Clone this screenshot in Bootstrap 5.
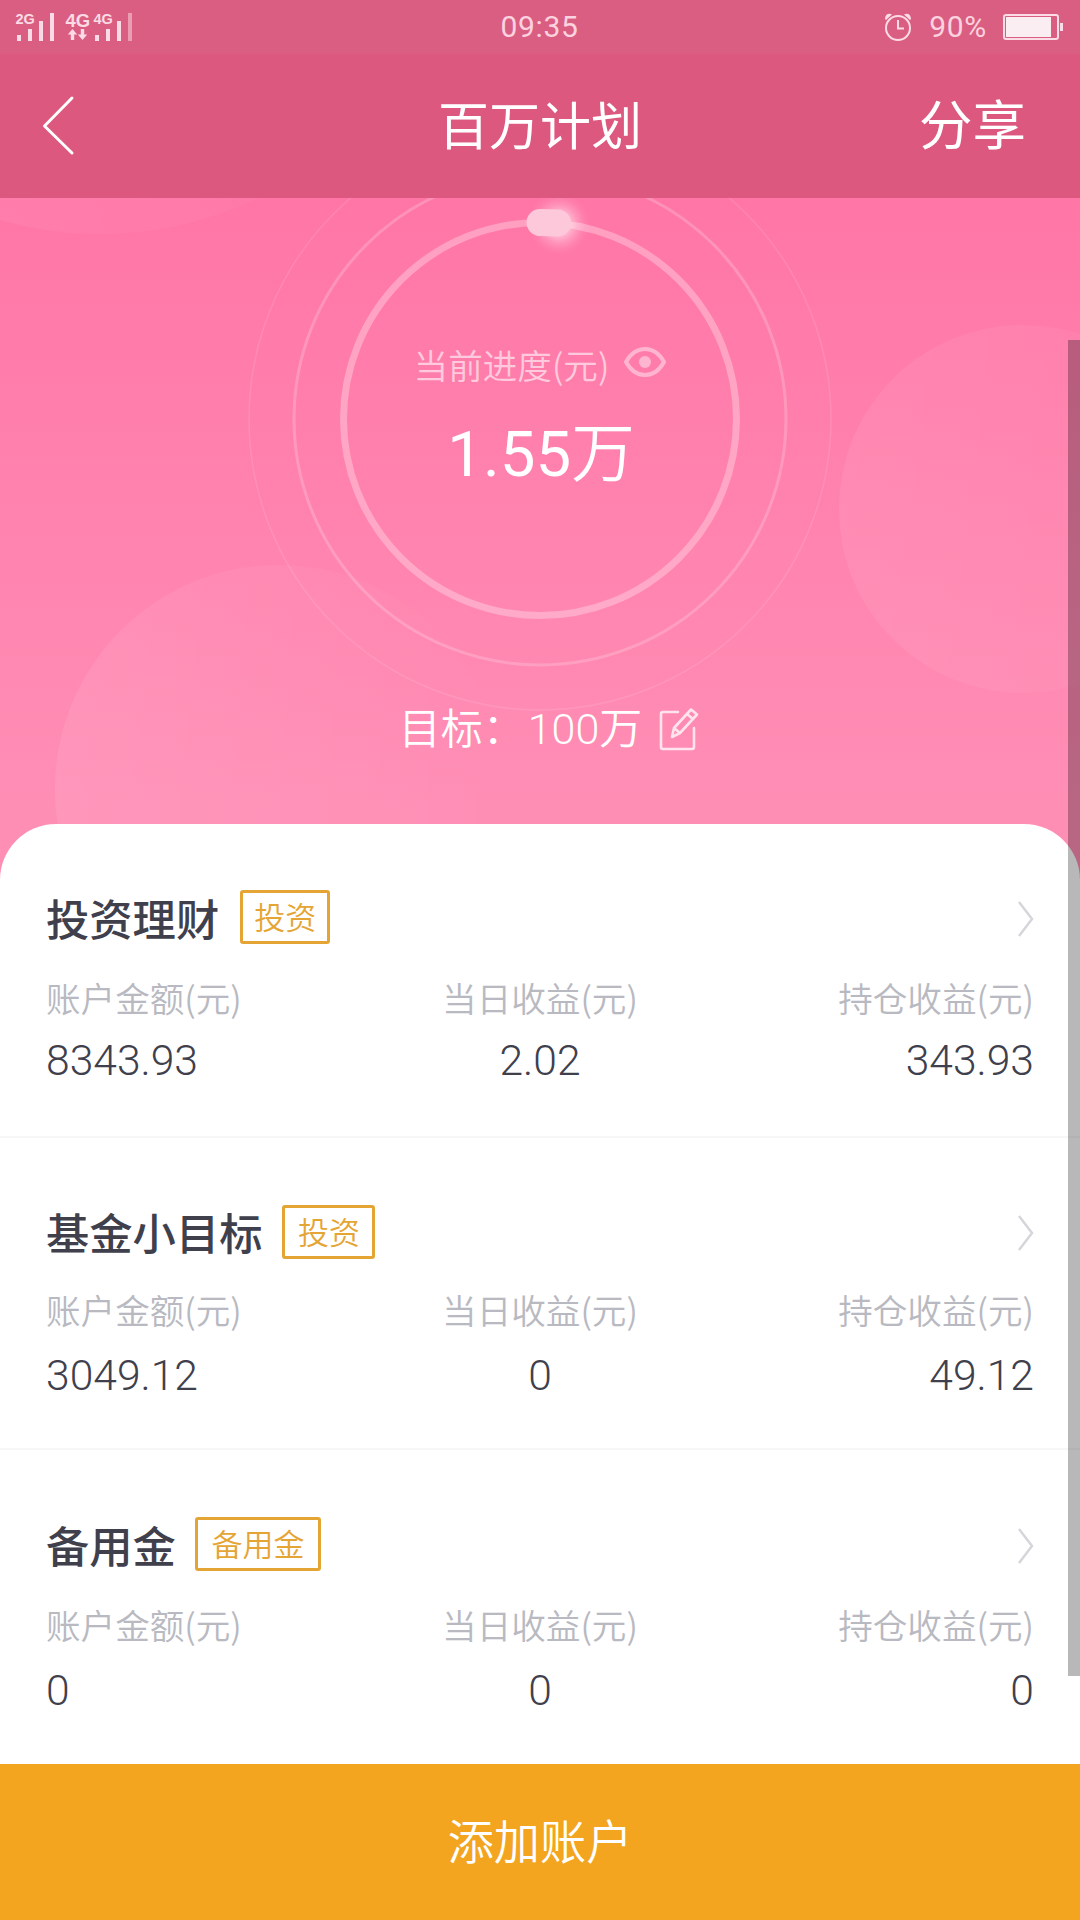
<!DOCTYPE html>
<html lang="zh-CN">
<head>
<meta charset="utf-8">
<meta name="viewport" content="width=device-width, initial-scale=1">
<title>百万计划</title>
<link rel="stylesheet" href="https://cdn.jsdelivr.net/npm/bootstrap@5.3.0/dist/css/bootstrap.min.css">
<style>
body{font-family:Roboto,"Noto Sans CJK SC",sans-serif;font-weight:300;color:#40404d;background:#fff;overflow:hidden}
.screen{width:1080px;height:1920px}
.statusbar{height:54px;background:#da5e82;color:#fbd2df;padding:0 16px 0 15px;font-size:30px;font-weight:400;line-height:52px;letter-spacing:.7px}
.topbar{height:144px;background:#dc587e;padding:0 54px 0 42px}
.topbar h1{font-size:51px;font-weight:400;line-height:60px;padding:4px 0 0 12px}
.share{font-size:53.5px;line-height:60px;font-weight:400;padding-top:2px}
.side{flex:1 1 0}
.hero{height:690px;background:linear-gradient(#ff76a6,#ff8eb5 88%);color:#fff;margin-bottom:-64px}
.scene{top:0;left:0}
.progress-copy{padding-top:141px}
.cjk{font-family:"Noto Sans CJK SC",sans-serif;font-weight:350}
.caption{font-size:34.6px;line-height:50px;color:#ffcade;gap:15px}
.amount{font-size:63.5px;line-height:80px;margin-top:26px;padding-left:2px;font-weight:350}
.amount .num{font-weight:400}
.goal{font-size:42px;line-height:56px;margin-top:206px;padding-left:18px;gap:17px;font-weight:350}
.goal .num{margin-left:3px;font-size:43px}
.sheet{height:940px;background:#fff;border-radius:56px 56px 0 0}
.account{padding:0 46px;border-bottom:2px solid #f7f7f8}
.first{height:314px;padding-top:66px}
.second{height:312px;padding-top:67px}
.third{height:314px;padding-top:67px;border:0}
.account h2{font-size:43.3px;line-height:54px;font-weight:500;font-family:"Noto Sans CJK SC",sans-serif}
.second h2{margin-top:-2px!important}
.kind{height:54px;border:3px solid #e5a535;border-radius:3px;color:#e5a535;font-size:31px;line-height:52px;padding:0 11px;margin-left:21px;font-weight:350}
.second .kind{margin-left:20px;padding:0 12.5px}
.third .kind{margin-left:19px;padding:0 13.5px}
.account svg{margin:4px -1px 0 0}
.second svg{margin-top:2px}
.label{font-size:34.6px;line-height:50px;color:#b8b9c1;margin-top:28px;font-family:"Noto Sans CJK SC",sans-serif;font-weight:350}
.value{font-size:42.6px;line-height:50px;margin-top:13px}
.second .label{margin-top:25px}.second .value{margin-top:16px}
.third .value{margin-top:16px}
.add{height:156px;background:#f3a51f;color:#fff;font-size:46.2px;font-weight:350;padding-top:9px}
.thumb{left:1068px;top:340px;width:12px;height:1336px;background:rgba(0,0,0,.28)}
</style>
<script src="https://cdn.jsdelivr.net/npm/bootstrap@5.3.0/dist/js/bootstrap.bundle.min.js"></script>
</head>
<body>
<div class="screen position-relative overflow-hidden d-flex flex-column">
  <header>
    <div class="statusbar d-flex align-items-center">
      <div class="side d-flex">
        <svg width="120" height="54" viewBox="15 0 120 54" fill="#fbdbe5" font-family="Liberation Sans,sans-serif" font-weight="bold" letter-spacing="0">
          <text x="15.5" y="24" font-size="14.5">2G</text>
          <path d="M17 35h4v6h-4zM28 29h4v12h-4zM39 21h4v20h-4zM50 13h4v28h-4z"/>
          <text x="65.500" y="27" font-size="18.5">4G</text>
          <path d="M72.500 29l4.700 5.500h-3v5.500h-3.400v-5.500h-3zM82.500 40l-4.700-5.500h3V29h3.400v5.500h3z"/>
          <text x="93.500" y="24" font-size="14.5">4G</text>
          <path d="M95 35h4v6h-4zM106 29h4v12h-4zM117 21h4v20h-4z"/>
          <path d="M128 13h4v28h-4z" opacity=".5"/>
        </svg>
      </div>
      <div>09:35</div>
      <div class="side d-flex justify-content-end align-items-center">
        <svg width="30" height="30" viewBox="0 0 30 30" fill="none" stroke="#fbdbe5" stroke-width="2"><circle cx="15" cy="16" r="12"/><path d="M15 8v8.500h6"/><path d="M2 7C2 2 6 .5 9 2.500L3 8zM28 7C28 2 24 .5 21 2.500L27 8z" fill="#fbdbe5" stroke="none"/></svg>
        <span class="ms-3">90%</span>
        <svg class="ms-3" width="61" height="28" viewBox="0 0 61 28"><rect x="1" y="2" width="54" height="24" rx="2" fill="none" stroke="#fbdbe5" stroke-width="2"/><path fill="#fbeef2" d="M3 4h45v20H3z"/><path fill="#fbdbe5" d="M57 10h3v8h-3z"/></svg>
      </div>
    </div>
    <nav class="topbar d-flex align-items-center text-white">
      <div class="side"><svg width="34" height="62" viewBox="0 0 34 62" fill="none" stroke="#fff" stroke-width="3" stroke-linecap="round" stroke-linejoin="round"><path d="M30 3L2.500 31l27.500 27"/></svg></div>
      <h1 class="m-0">百万计划</h1>
      <div class="side text-end share">分享</div>
    </nav>
  </header>

  <section class="hero position-relative flex-shrink-0">
    <svg class="scene position-absolute" width="1080" height="690" viewBox="0 198 1080 690" fill="none">
      <defs>
        <linearGradient id="orb"><stop stop-color="#fff" stop-opacity=".08"/><stop offset="1" stop-color="#fff" stop-opacity="0"/></linearGradient>
        <linearGradient id="orb2"><stop stop-color="#fff" stop-opacity=".07"/><stop offset="1" stop-color="#fff" stop-opacity=".02"/></linearGradient>
        <radialGradient id="glow"><stop offset=".3" stop-color="#fff" stop-opacity=".55"/><stop offset=".6" stop-color="#fff" stop-opacity=".22"/><stop offset=".82" stop-color="#fff" stop-opacity=".06"/><stop offset="1" stop-color="#fff" stop-opacity="0"/></radialGradient>
      </defs>
      <circle cx="100" cy="-131" r="365" fill="url(#orb)"/>
      <circle cx="1023" cy="509" r="184" fill="url(#orb2)"/>
      <circle cx="279" cy="789" r="224" fill="url(#orb)"/>
      <circle cx="540" cy="419" r="291" stroke="#fff" stroke-opacity=".11" stroke-width="1.500"/>
      <circle cx="540" cy="419" r="246" stroke="#fff" stroke-opacity=".2" stroke-width="3"/>
      <circle cx="540" cy="419" r="196.500" stroke="#fff" stroke-opacity=".3" stroke-width="7"/>
      <circle cx="559" cy="224" r="31" fill="url(#glow)"/>
      <path d="M540 222.500L557.500 223" stroke="#fdc9da" stroke-width="27" stroke-linecap="round"/>
    </svg>
    <div class="progress-copy position-relative d-flex flex-column align-items-center">
      <div class="caption d-flex align-items-center"><span class="cjk">当前进度(元)</span>
        <svg class="mb-1" width="42" height="32" viewBox="0 0 42 32" fill="none" stroke="#ffb5d0" stroke-width="4"><path d="M2 16C7 7 13 3 21 3s14 4 19 13c-5 9-11 13-19 13S7 25 2 16z" stroke-linejoin="round"/><circle cx="21" cy="16" r="6" fill="#ffb5d0" stroke="none"/></svg>
      </div>
      <div class="amount"><span class="num">1.55</span>万</div>
      <div class="goal d-flex align-items-center"><div><span>目标：</span><span class="num">100万</span></div>
        <svg width="40" height="44" viewBox="0 0 40 44" fill="none" stroke="#ffe4ee" stroke-width="2.600" stroke-linecap="round" stroke-linejoin="round"><path d="M19 4H4Q2 4 2 6v33q0 2 2 2h29q2 0 2-2V20"/><path d="M15 20L32 1.500l6 5L21 25l-8 4zM15 20l6 5M28 6l6 5"/></svg>
      </div>
    </div>
  </section>

  <main class="sheet position-relative flex-shrink-0">
    <section class="account first">
      <div class="d-flex align-items-center"><h2 class="m-0">投资理财</h2><span class="kind">投资</span>
        <svg class="ms-auto" width="18" height="38" viewBox="0 0 18 38" fill="none" stroke="#d5d6db" stroke-width="2.500"><path d="M2 2l13 17L2 36"/></svg></div>
      <div class="row gx-0"><div class="col"><div class="label">账户金额(元)</div><div class="value">8343.93</div></div><div class="col text-center"><div class="label">当日收益(元)</div><div class="value">2.02</div></div><div class="col text-end"><div class="label">持仓收益(元)</div><div class="value">343.93</div></div></div>
    </section>
    <section class="account second">
      <div class="d-flex align-items-center"><h2 class="m-0">基金小目标</h2><span class="kind">投资</span>
        <svg class="ms-auto" width="18" height="38" viewBox="0 0 18 38" fill="none" stroke="#d5d6db" stroke-width="2.500"><path d="M2 2l13 17L2 36"/></svg></div>
      <div class="row gx-0"><div class="col"><div class="label">账户金额(元)</div><div class="value">3049.12</div></div><div class="col text-center"><div class="label">当日收益(元)</div><div class="value">0</div></div><div class="col text-end"><div class="label">持仓收益(元)</div><div class="value">49.12</div></div></div>
    </section>
    <section class="account third">
      <div class="d-flex align-items-center"><h2 class="m-0">备用金</h2><span class="kind">备用金</span>
        <svg class="ms-auto" width="18" height="38" viewBox="0 0 18 38" fill="none" stroke="#d5d6db" stroke-width="2.500"><path d="M2 2l13 17L2 36"/></svg></div>
      <div class="row gx-0"><div class="col"><div class="label">账户金额(元)</div><div class="value">0</div></div><div class="col text-center"><div class="label">当日收益(元)</div><div class="value">0</div></div><div class="col text-end"><div class="label">持仓收益(元)</div><div class="value">0</div></div></div>
    </section>
  </main>

  <button class="add btn rounded-0 border-0 w-100 flex-shrink-0" type="button">添加账户</button>
  <div class="thumb position-absolute"></div>
</div>
</body>
</html>
